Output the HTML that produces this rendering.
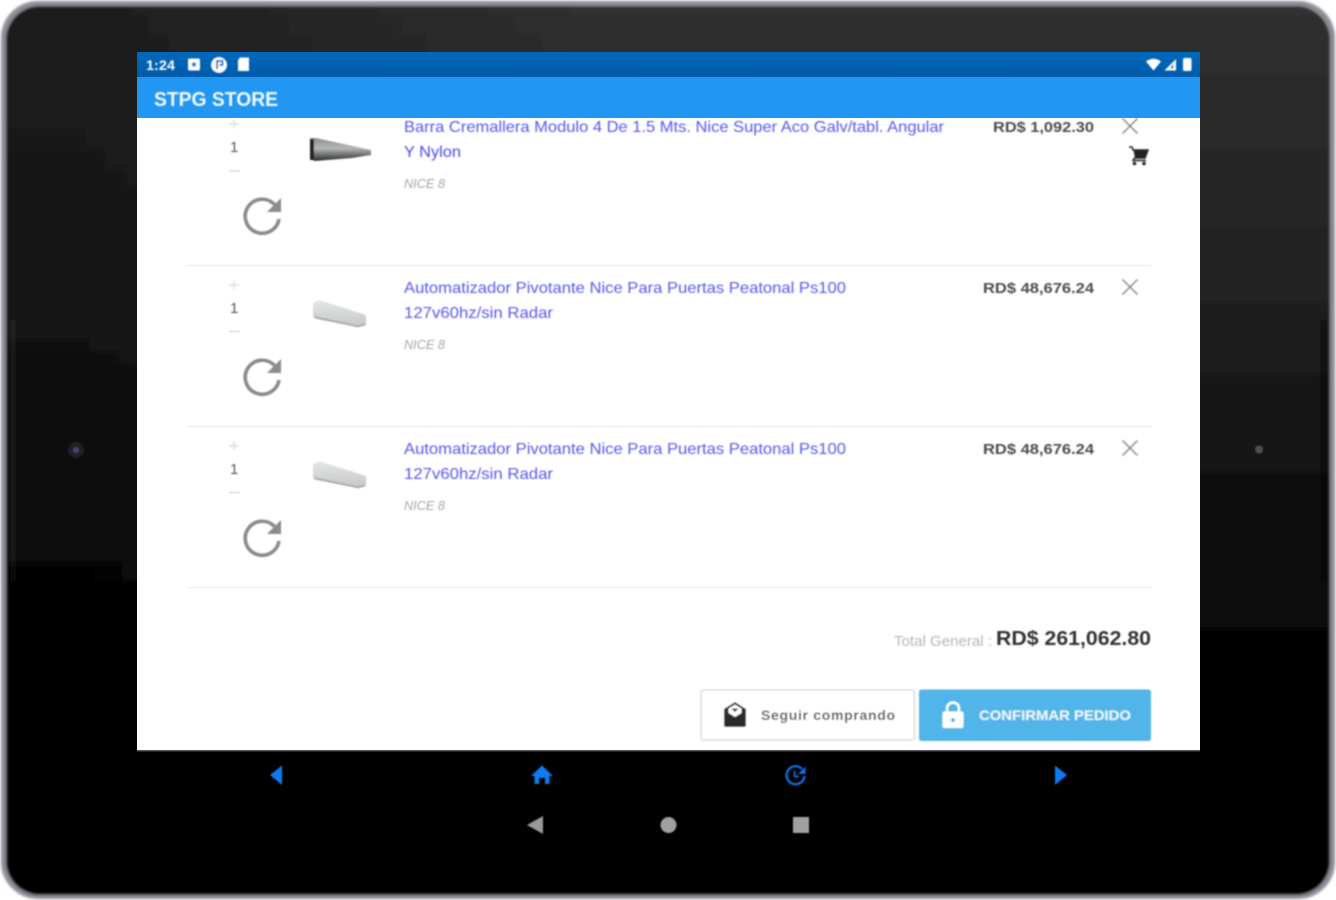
<!DOCTYPE html>
<html><head><meta charset="utf-8"><title>STPG STORE</title>
<style>
html,body{margin:0;padding:0;background:#fff;width:1336px;height:900px;overflow:hidden}
svg{display:block;font-family:"Liberation Sans",sans-serif}
.b{filter:url(#bl)}
</style></head><body>
<svg width="1336" height="900" viewBox="0 0 1336 900" xmlns="http://www.w3.org/2000/svg">
<defs>
<linearGradient id="bz" x1="0" y1="0" x2="0" y2="1"><stop offset="0" stop-color="#303030"/><stop offset=".3" stop-color="#222"/><stop offset=".6" stop-color="#0c0c0c"/><stop offset=".82" stop-color="#000"/><stop offset="1" stop-color="#000"/></linearGradient>
<linearGradient id="bzl" x1="0" y1="0" x2="1" y2="0"><stop offset="0" stop-color="#000" stop-opacity=".38"/><stop offset=".12" stop-color="#000" stop-opacity=".38"/><stop offset=".88" stop-color="#000" stop-opacity="0"/></linearGradient>
<linearGradient id="sb" x1="0" y1="0" x2="0" y2="1"><stop offset="0" stop-color="#0069bd"/><stop offset="1" stop-color="#005aa8"/></linearGradient>
<linearGradient id="acg" x1="0" y1="0" x2="0" y2="1"><stop offset="0" stop-color="#e6e7e7"/><stop offset="1" stop-color="#c4c7c7"/></linearGradient>
<linearGradient id="barg" x1="0" y1="0" x2="0" y2="1"><stop offset="0" stop-color="#8a8d8e"/><stop offset=".45" stop-color="#b5b7b7"/><stop offset="1" stop-color="#2b2b2b"/></linearGradient>
<filter id="bl" x="-5%" y="-5%" width="110%" height="110%"><feGaussianBlur stdDeviation="0.8"/></filter>
<filter id="bl2" x="-20%" y="-20%" width="140%" height="140%"><feGaussianBlur stdDeviation="1"/></filter>
<filter id="rim" x="-2%" y="-2%" width="104%" height="104%"><feGaussianBlur stdDeviation="1.300"/></filter>
<g id="reload" fill="none"><path d="M274.500 204.500A17 17 0 1 0 279 219" stroke="#8b8b8b" stroke-width="3.600"/><path d="M281 198V212H267Z" fill="#8b8b8b"/></g>
<g id="x" stroke="#8a8a8a" stroke-width="1.500" fill="none"><path d="M1122.500 118.500L1137.500 133.500M1137.500 118.500L1122.500 133.500"/></g>
<g id="ac" filter="url(#bl)"><path d="M313 303L319 300L366 315L366 325L358 327L316 319L313 316Z" fill="url(#acg)"/><path d="M314 317L358 326.500L365 324.500" stroke="#a3a39b" stroke-width="1.500" fill="none"/></g>
</defs>

<g filter="url(#rim)">
<rect x="1" y="1" width="1334" height="898" rx="37" fill="#8d8d96"/>
<rect x="6" y="6" width="1324" height="889" rx="34" fill="url(#bz)"/>
<rect x="6" y="6" width="660" height="889" rx="34" fill="url(#bzl)"/>
</g>

<rect x="10" y="320" width="6" height="262" fill="#fff" opacity=".04" class="b"/>
<rect x="1320" y="320" width="7" height="262" fill="#000" opacity=".35" class="b"/>
<circle cx="76" cy="450" r="8" fill="#232326" filter="url(#bl2)"/>
<circle cx="76" cy="450" r="3" fill="#3f4778" filter="url(#bl)"/>
<circle cx="1259" cy="449.500" r="4" fill="#505050" filter="url(#bl)"/>

<rect x="137" y="52" width="1063" height="698" fill="#fff"/>
<rect x="137" y="52" width="1063" height="25" fill="url(#sb)"/>
<rect x="137" y="77" width="1063" height="41" fill="#2196f3"/>

<g class="b">
<text x="146" y="70" font-size="14" font-weight="700" fill="#fff" textLength="29" lengthAdjust="spacingAndGlyphs">1:24</text>
<rect x="188" y="58.500" width="12" height="12" rx="1.500" fill="#fff"/><rect x="192" y="62.500" width="4" height="4" fill="#2a7fc6"/>
<circle cx="219" cy="65" r="8" fill="#fff"/><path d="M217 69V61H222.500V65H219.500" fill="none" stroke="#1f78c2" stroke-width="2"/>
<path d="M240 57.500H249V71H238V60Z" fill="#fff"/>
<path d="M1146 61.500Q1153.500 56 1161 61.500L1153.500 70.500Z" fill="#fff"/>
<path d="M1176 59V70.500H1164.500Z" fill="#fff"/><path d="M1173.500 63.500V68.500H1170Z" fill="#1f78c2"/>
<rect x="1183" y="58" width="8.500" height="13" rx="1.500" fill="#fff"/>
<text x="154" y="106" font-size="20" font-weight="700" fill="#f3f9ff" textLength="124" lengthAdjust="spacingAndGlyphs">STPG STORE</text>
</g>

<!-- item rows -->
<g class="b">
<path d="M229 124H239M234 119.500V128.500" stroke="#dedede" stroke-width="1.400"/>
<text x="230" y="152" font-size="15" fill="#555">1</text>
<path d="M229 171H240" stroke="#d4d4d4" stroke-width="1.400"/>
<text x="404" y="132" font-size="16" fill="#5757f2" textLength="540" lengthAdjust="spacingAndGlyphs">Barra Cremallera Modulo 4 De 1.5 Mts. Nice Super Aco Galv/tabl. Angular</text>
<text x="404" y="157" font-size="16" fill="#4a4aec" textLength="57" lengthAdjust="spacingAndGlyphs">Y Nylon</text>
<text x="404" y="188" font-size="13" font-style="italic" fill="#a5a5a5" textLength="41" lengthAdjust="spacingAndGlyphs">NICE 8</text>
<text x="993" y="132" font-size="15" font-weight="700" fill="#4b4b4b" textLength="101" lengthAdjust="spacingAndGlyphs">RD$ 1,092.30</text>
<use href="#x"/>
<use href="#reload"/>
<path d="M1129 147H1132L1133 150H1148L1145 158H1134.500L1133 160.500H1146" fill="none" stroke="#222" stroke-width="1.500"/><path d="M1133.500 150.500H1147.500L1144.500 158H1135Z" fill="#222"/>
<circle cx="1134.500" cy="163.500" r="1.800" fill="#222"/><circle cx="1144" cy="163.500" r="1.800" fill="#222"/>
<path d="M310 138L316 138L371 150L371 155L352 158L315 161L310 159Z" fill="url(#barg)"/>
<path d="M310 139L314 139L314 160L310 160Z" fill="#222"/>
</g>
<path d="M187 265.500H1151" stroke="#ececec" stroke-width="1.200"/>

<g class="b">
<path d="M229 285H239M234 280.500V289.500" stroke="#dedede" stroke-width="1.400"/>
<text x="230" y="313" font-size="15" fill="#555">1</text>
<path d="M229 331.500H240" stroke="#d4d4d4" stroke-width="1.400"/>
<text x="404" y="293" font-size="16" fill="#5757f2" textLength="442" lengthAdjust="spacingAndGlyphs">Automatizador Pivotante Nice Para Puertas Peatonal Ps100</text>
<text x="404" y="318" font-size="16" fill="#5757f2" textLength="149" lengthAdjust="spacingAndGlyphs">127v60hz/sin Radar</text>
<text x="404" y="349" font-size="13" font-style="italic" fill="#a5a5a5" textLength="41" lengthAdjust="spacingAndGlyphs">NICE 8</text>
<text x="983" y="293" font-size="15" font-weight="700" fill="#4b4b4b" textLength="111" lengthAdjust="spacingAndGlyphs">RD$ 48,676.24</text>
<use href="#x" y="161"/>
<use href="#reload" y="161"/>
</g>
<use href="#ac"/>
<path d="M187 426.500H1151" stroke="#ececec" stroke-width="1.200"/>

<g class="b">
<path d="M229 446H239M234 441.500V450.500" stroke="#dedede" stroke-width="1.400"/>
<text x="230" y="474" font-size="15" fill="#555">1</text>
<path d="M229 492.500H240" stroke="#d4d4d4" stroke-width="1.400"/>
<text x="404" y="454" font-size="16" fill="#5757f2" textLength="442" lengthAdjust="spacingAndGlyphs">Automatizador Pivotante Nice Para Puertas Peatonal Ps100</text>
<text x="404" y="479" font-size="16" fill="#5757f2" textLength="149" lengthAdjust="spacingAndGlyphs">127v60hz/sin Radar</text>
<text x="404" y="510" font-size="13" font-style="italic" fill="#a5a5a5" textLength="41" lengthAdjust="spacingAndGlyphs">NICE 8</text>
<text x="983" y="454" font-size="15" font-weight="700" fill="#4b4b4b" textLength="111" lengthAdjust="spacingAndGlyphs">RD$ 48,676.24</text>
<use href="#x" y="322"/>
<use href="#reload" y="322"/>
</g>
<use href="#ac" y="161"/>
<path d="M187 587.500H1151" stroke="#f0f0f0" stroke-width="1.200"/>

<!-- total + buttons -->
<g class="b">
<text x="894" y="646" font-size="15" fill="#b5b5b5" textLength="98" lengthAdjust="spacingAndGlyphs">Total General :</text>
<text x="996" y="645" font-size="20" font-weight="700" fill="#333" textLength="155" lengthAdjust="spacingAndGlyphs">RD$ 261,062.80</text>
<rect x="701" y="690" width="213.500" height="50" rx="2.500" fill="#fff" stroke="#dcdcdc" stroke-width="1.500"/>
<path d="M724 709L735 702L746 709V725Q746 727 744 727H726Q724 727 724 725Z" fill="#2c2c2c"/>
<path d="M728.500 708.500L735 704.500L741.500 708.500V713L735 717L728.500 713Z" fill="#fff"/>
<path d="M731.500 708.500H738.500L735 712Z" fill="#2c2c2c"/>
<text x="761" y="720" font-size="14" font-weight="700" fill="#555" textLength="134" lengthAdjust="spacing">Seguir comprando</text>
<rect x="919" y="689.500" width="232" height="51.500" rx="2.500" fill="#51b5ea"/>
<rect x="942.500" y="711.500" width="21" height="16.500" rx="2" fill="#fff"/>
<path d="M947 712V708.500A6 6 0 0 1 959 708.500V712" fill="none" stroke="#fff" stroke-width="2.500"/>
<circle cx="953" cy="720" r="2" fill="#51b5ea"/>
<text x="979" y="720" font-size="14" font-weight="700" fill="#eef8fd" textLength="152" lengthAdjust="spacingAndGlyphs">CONFIRMAR PEDIDO</text>
</g>

<!-- bottom bars -->
<rect x="137" y="750" width="1063" height="1.500" fill="#555"/>
<g class="b">
<path d="M282 765.500V785L270 775Z" fill="#0a7cf0"/>
<path d="M542 765.500L553 776H549.500V784H545V778H539V784H534.500V776H531Z" fill="#0a7cf0"/>
<path d="M802 769A9 9 0 1 0 804.500 776" fill="none" stroke="#0a6fe0" stroke-width="2.300"/>
<path d="M805.500 766.500V774H798Z" fill="#0a6fe0"/>
<path d="M794.500 770.500V776.500H799" fill="none" stroke="#0a6fe0" stroke-width="1.800"/>
<path d="M1055 765.500V785L1067 775Z" fill="#0a7cf0"/>
<path d="M543 816V834L527 825Z" fill="#9a9a9a"/>
<circle cx="668.500" cy="825" r="8" fill="#a0a0a0"/>
<rect x="793" y="817" width="16" height="16" fill="#a0a0a0"/>
</g>
</svg>
</body></html>
